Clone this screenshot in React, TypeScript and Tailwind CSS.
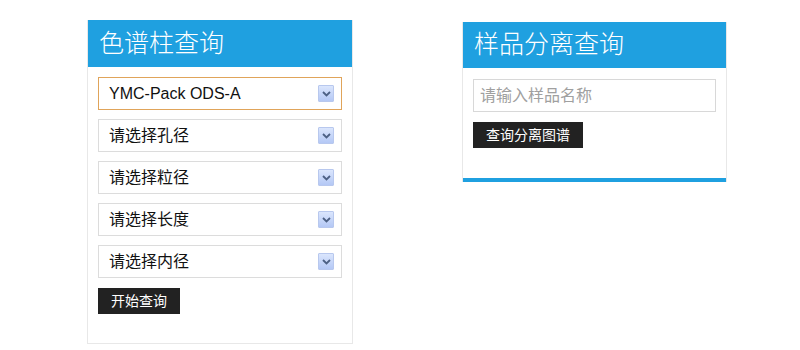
const FONT = "font-['Liberation_Sans','Noto_Sans_CJK_SC',sans-serif]";

const SELECTS = ["YMC-Pack ODS-A", "请选择孔径", "请选择粒径", "请选择长度", "请选择内径"];

function SelectArrow() {
  return (
    <span className="flex h-[17px] w-[16px] items-center justify-center rounded-[1px] border border-[#b8c8ee] bg-gradient-to-b from-[#dbe6fd] to-[#b4c8f5]">
      <svg width="9" height="6" viewBox="0 0 9 6">
        <path d="M1 1 L4.5 4.5 L8 1" fill="none" stroke="#4d6185" strokeWidth="1.8" />
      </svg>
    </span>
  );
}

function FakeSelect({ label, active }: { label: string; active?: boolean }) {
  return (
    <div
      className={`flex h-[33px] items-center justify-between border pl-[10px] pr-[7px] text-[16px] text-[#111] ${
        active ? "border-[#e0a45a]" : "border-[#dcdcdc]"
      }`}
    >
      <span>{label}</span>
      <SelectArrow />
    </div>
  );
}

export default function App() {
  return (
    <div className={`flex h-[350px] w-[800px] items-start bg-white ${FONT}`}>
      {/* 색보주 조회 */}
      <section className="ml-[87px] mt-[20px] w-[266px] border border-[#e8e8e8] border-t-0">
        <h2 className="flex h-[47px] items-center bg-[#1fa0e0] pl-[11px] text-[25px] font-light text-white">
          色谱柱查询
        </h2>
        <div className="flex flex-col gap-[9px] px-[10px] pb-[29px] pt-[10px]">
          {SELECTS.map((s, i) => (
            <FakeSelect key={s} label={s} active={i === 0} />
          ))}
          <button className="mt-px h-[26px] w-[82px] bg-[#222] text-[14px] text-white">开始查询</button>
        </div>
      </section>

      {/* 샘플 분리 조회 */}
      <section className="ml-[109px] mt-[22px] w-[265px] border-x border-[#e8e8e8]">
        <h2 className="flex h-[46px] items-center bg-[#1fa0e0] pl-[11px] text-[25px] font-light text-white">
          样品分离查询
        </h2>
        <div className="flex flex-col gap-[10px] px-[10px] pb-[30px] pt-[11px]">
          <div className="flex h-[33px] items-center border border-[#d8d8d8] pl-[6px] text-[16px] text-[#a0a0a0]">
            请输入样品名称
          </div>
          <button className="h-[26px] w-[110px] bg-[#222] text-[14px] text-white">查询分离图谱</button>
        </div>
        <div className="h-[4px] bg-[#1fa0e0]" />
      </section>
    </div>
  );
}
